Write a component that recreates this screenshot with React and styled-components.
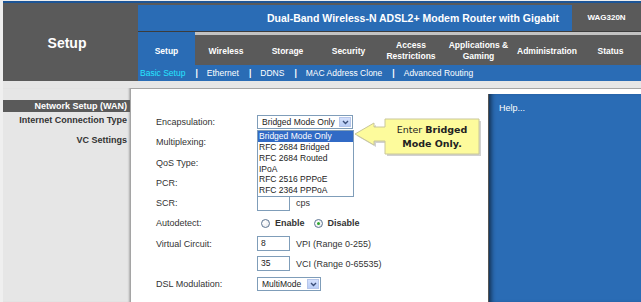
import React from 'react';
import styled, { createGlobalStyle } from 'styled-components';

const BLUE = '#2a6cb5';
const GRAY = '#5a5a5a';
const FIELD_BORDER = '#7f9db9';

const GlobalStyle = createGlobalStyle`
  * { box-sizing: border-box; }
  html, body { margin: 0; padding: 0; }
  body {
    background: #efefef;
    font-family: "Liberation Sans", Arial, sans-serif;
    overflow: hidden;
  }
`;

const Page = styled.div`
  width: 638px;
  margin-left: 3px;
  padding-top: 1px;
`;

const TopLine = styled.div`
  height: 2px;
  background: #1d5596;
`;

const Header = styled.header`
  display: grid;
  grid-template-columns: 135px 1fr;
  height: 78px;
  background: ${GRAY};
`;

const PageTitle = styled.div`
  display: flex;
  align-items: center;
  justify-content: center;
  padding: 2px 7px 0 0;
  color: #fff;
  font-weight: bold;
  font-size: 14px;
`;

const HeaderRight = styled.div`
  display: flex;
  flex-direction: column;
`;

const TitleRow = styled.div`
  display: flex;
  height: 26px;
  margin-top: 2px;
`;

const ProductName = styled.div`
  flex: 1;
  display: flex;
  align-items: center;
  justify-content: flex-end;
  padding-right: 13px;
  background: ${BLUE};
  color: #fff;
  font-weight: bold;
  font-size: 10.5px;
`;

const Model = styled.div`
  width: 69px;
  display: flex;
  align-items: center;
  justify-content: center;
  padding-bottom: 2px;
  color: #fff;
  font-weight: bold;
  font-size: 8px;
`;

const NavRow = styled.nav`
  display: grid;
  grid-template-columns: 57px 62px 61px 61px 64px 71px 66px 1fr;
  height: 34px;
  border-top: 1px solid #3c3c3c;
`;

const Tab = styled.div`
  display: flex;
  align-items: center;
  justify-content: center;
  padding-top: 5px;
  text-align: center;
  color: #fff;
  font-weight: bold;
  font-size: 8.5px;
  line-height: 11px;
  background: ${p => (p.$active ? BLUE : GRAY)};
  box-shadow: ${p => (p.$active ? 'none' : 'inset 0 3px 0 #c2c2c2')};
`;

const SubNav = styled.div`
  display: flex;
  align-items: center;
  height: 16px;
  padding-left: 2px;
  background: ${BLUE};
  font-size: 8.5px;
  color: #fff;
`;

const SubLink = styled.span`
  color: ${p => (p.$active ? '#27e4ff' : '#fff')};
`;

const Sep = styled.span`
  margin: 0 9px 0 10px;
  font-weight: bold;
`;

const Body = styled.div`
  display: grid;
  grid-template-columns: 127px 1fr;
  height: 221px;
  padding-top: 7px;
  background: #e6e6e6;
`;

const SideNav = styled.aside`
  display: flex;
  flex-direction: column;
  padding-top: 12px;
  box-shadow: inset -2px 0 2px -1px rgba(0, 0, 0, 0.25);
`;

const SectionBar = styled.div`
  height: 12px;
  line-height: 12px;
  padding-right: 3px;
  text-align: right;
  background: ${GRAY};
  color: #fff;
  font-weight: bold;
  font-size: 9px;
`;

const SideItem = styled.div`
  height: 16px;
  line-height: 16px;
  margin-bottom: 4px;
  padding-right: 3px;
  text-align: right;
  color: #333;
  font-weight: bold;
  font-size: 9px;
`;

const Panel = styled.main`
  display: flex;
  background: #fff;
  border-top: 1px solid #a5a5a5;
  border-left: 1px solid #a5a5a5;
`;

const Form = styled.div`
  flex: 1;
  display: grid;
  grid-template-columns: 101px 1fr;
  grid-auto-rows: 20.25px;
  align-items: center;
  align-content: start;
  padding: 23px 0 0 25px;
  font-size: 9px;
  color: #333;
`;

const Label = styled.div``;

const Control = styled.div`
  display: flex;
  align-items: center;
  gap: 6px;
`;

const TextInput = styled.div`
  width: 33px;
  height: 15px;
  line-height: 13px;
  padding-left: 3px;
  border: 1px solid ${FIELD_BORDER};
  background: #fff;
  font-size: 8.5px;
  color: #222;
`;

const SelectWrap = styled.div`
  position: relative;
  z-index: ${p => p.$z || 'auto'};
`;

const Select = styled.div`
  display: flex;
  align-items: center;
  width: ${p => p.$w}px;
  height: 14px;
  padding: 0 1px 0 4px;
  border: 1px solid ${FIELD_BORDER};
  background: #fff;
  font-size: 8.5px;
  color: #222;
`;

const SelectText = styled.span`
  flex: 1;
  overflow: hidden;
  white-space: nowrap;
`;

const ArrowBox = styled.span`
  display: flex;
  align-items: center;
  justify-content: center;
  width: 12px;
  height: 10px;
  border: 1px solid #b6c6ea;
  background: linear-gradient(#d4e0fc, #b9cdf6);
`;

const List = styled.ul`
  position: absolute;
  top: 15px;
  left: 0;
  width: 97px;
  margin: 0;
  padding: 0;
  list-style: none;
  border: 1px solid ${FIELD_BORDER};
  background: #fff;
  font-size: 8.5px;
  color: #222;
`;

const Option = styled.li`
  height: 10.8px;
  line-height: 10.8px;
  padding-left: 1px;
  white-space: nowrap;
  background: ${p => (p.$selected ? '#316ac5' : 'transparent')};
  color: ${p => (p.$selected ? '#fff' : '#222')};
`;

const Callout = styled.div`
  position: absolute;
  left: 96px;
  top: 2px;
  width: 132px;
  height: 42px;
`;

const CalloutShape = styled.svg`
  position: absolute;
  left: 0;
  top: 0;
`;

const CalloutText = styled.div`
  position: relative;
  width: 94px;
  margin-left: 32px;
  padding-top: 6px;
  text-align: center;
  font-family: "DejaVu Sans", Verdana, sans-serif;
  font-size: 9.5px;
  line-height: 13.5px;
  color: #222;
`;

const RadioGroup = styled.div`
  display: flex;
  align-items: center;
  padding-left: 4px;
  font-weight: bold;
`;

const RadioDot = styled.span`
  position: relative;
  width: 9px;
  height: 9px;
  margin-right: 5px;
  border: 1px solid #5d7592;
  border-radius: 50%;
  background: radial-gradient(circle at 35% 35%, #fff, #e4e6ea);

  &::after {
    content: '';
    display: ${p => (p.$checked ? 'block' : 'none')};
    position: absolute;
    left: 2px;
    top: 2px;
    width: 3px;
    height: 3px;
    border-radius: 50%;
    background: #2ea52e;
  }
`;

const RadioLabel = styled.span`
  margin-right: ${p => p.$gap || 0}px;
`;

const Help = styled.aside`
  width: 153px;
  margin-top: 5px;
  padding: 9px 0 0 10px;
  background: ${BLUE};
  border-left: 1px solid #555;
  box-shadow: inset 5px 0 5px -3px rgba(0, 0, 0, 0.6);
  color: #fff;
  font-size: 9px;
`;

const Chevron = () => (
  <svg width="7" height="5" viewBox="0 0 7 5">
    <polyline points="1,1 3.5,3.5 6,1" fill="none" stroke="#3b4e78" strokeWidth="1.4" />
  </svg>
);

const tabs = [
  'Setup',
  'Wireless',
  'Storage',
  'Security',
  ['Access', 'Restrictions'],
  ['Applications &', 'Gaming'],
  'Administration',
  'Status',
];

const subLinks = ['Basic Setup', 'Ethernet', 'DDNS', 'MAC Address Clone', 'Advanced Routing'];

const encapsulations = [
  'Bridged Mode Only',
  'RFC 2684 Bridged',
  'RFC 2684 Routed',
  'IPoA',
  'RFC 2516 PPPoE',
  'RFC 2364 PPPoA',
];

export default function App() {
  return (
    <>
      <GlobalStyle />
      <Page>
        <TopLine />
        <Header>
          <PageTitle>Setup</PageTitle>
          <HeaderRight>
            <TitleRow>
              <ProductName>Dual-Band Wireless-N ADSL2+ Modem Router with Gigabit</ProductName>
              <Model>WAG320N</Model>
            </TitleRow>
            <NavRow>
              {tabs.map((t, i) => (
                <Tab key={i} $active={i === 0}>
                  {Array.isArray(t) ? (
                    <span>
                      {t[0]}
                      <br />
                      {t[1]}
                    </span>
                  ) : (
                    t
                  )}
                </Tab>
              ))}
            </NavRow>
            <SubNav>
              {subLinks.map((l, i) => (
                <React.Fragment key={l}>
                  {i > 0 && <Sep>|</Sep>}
                  <SubLink $active={i === 0}>{l}</SubLink>
                </React.Fragment>
              ))}
            </SubNav>
          </HeaderRight>
        </Header>

        <Body>
          <SideNav>
            <SectionBar>Network Setup (WAN)</SectionBar>
            <SideItem>Internet Connection Type</SideItem>
            <SideItem>VC Settings</SideItem>
          </SideNav>

          <Panel>
            <Form>
              <Label>Encapsulation:</Label>
              <Control>
                <SelectWrap $z={5}>
                  <Select $w={96}>
                    <SelectText>Bridged Mode Only</SelectText>
                    <ArrowBox><Chevron /></ArrowBox>
                  </Select>
                  <List>
                    {encapsulations.map((e, i) => (
                      <Option key={e} $selected={i === 0}>{e}</Option>
                    ))}
                  </List>
                  <Callout>
                    <CalloutShape width="132" height="42" viewBox="0 0 132 42">
                      <path
                        d="M32,2 H126 V37 H32 V24 H21 V28 L2,17 L21,6 V10 H32 Z"
                        transform="translate(2,2)"
                        fill="rgba(0,0,0,0.18)"
                      />
                      <path
                        d="M32,2 H126 V37 H32 V24 H21 V28 L2,17 L21,6 V10 H32 Z"
                        fill="#fdfb9c"
                        stroke="#c9c79a"
                        strokeWidth="1"
                      />
                    </CalloutShape>
                    <CalloutText>
                      Enter <b>Bridged</b>
                      <br />
                      <b>Mode Only.</b>
                    </CalloutText>
                  </Callout>
                </SelectWrap>
              </Control>

              <Label>Multiplexing:</Label>
              <Control />

              <Label>QoS Type:</Label>
              <Control />

              <Label>PCR:</Label>
              <Control />

              <Label>SCR:</Label>
              <Control>
                <TextInput />
                <span>cps</span>
              </Control>

              <Label>Autodetect:</Label>
              <RadioGroup>
                <RadioDot />
                <RadioLabel $gap={9}>Enable</RadioLabel>
                <RadioDot $checked />
                <RadioLabel>Disable</RadioLabel>
              </RadioGroup>

              <Label>Virtual Circuit:</Label>
              <Control>
                <TextInput>8</TextInput>
                <span>VPI (Range 0-255)</span>
              </Control>

              <Label />
              <Control>
                <TextInput>35</TextInput>
                <span>VCI (Range 0-65535)</span>
              </Control>

              <Label>DSL Modulation:</Label>
              <Control>
                <SelectWrap>
                  <Select $w={64}>
                    <SelectText>MultiMode</SelectText>
                    <ArrowBox><Chevron /></ArrowBox>
                  </Select>
                </SelectWrap>
              </Control>
            </Form>
            <Help>Help...</Help>
          </Panel>
        </Body>
      </Page>
    </>
  );
}
